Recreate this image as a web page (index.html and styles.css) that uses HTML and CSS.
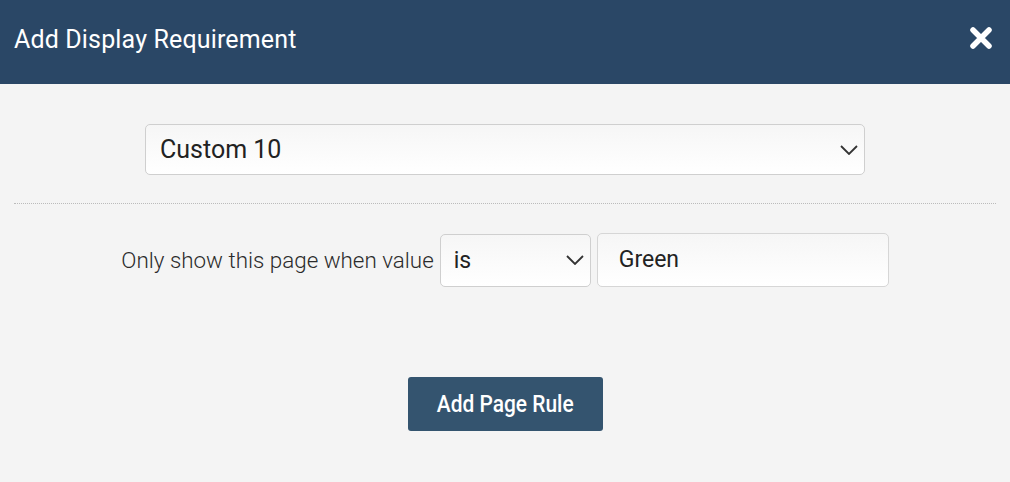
FILE: index.html
```html
<!DOCTYPE html>
<html>
<head>
<meta charset="utf-8">
<link rel="stylesheet" href="styles.css">
</head>
<body>
<div class="modal">
  <header class="modal-header">
    <h1 class="modal-title">Add Display Requirement</h1>
    <button class="close-btn" aria-label="Close">
      <svg width="24" height="24" viewBox="0 0 24 24"><path d="M4 4 L20 20 M20 4 L4 20" stroke="#fff" stroke-width="5.5" stroke-linecap="round"/></svg>
    </button>
  </header>
  <main class="modal-body">
    <div class="field-row">
      <div class="select big-select">
        <span>Custom 10</span>
        <svg class="chev" width="18" height="10" viewBox="0 0 18 10"><path d="M1 1 L9 9 L17 1" fill="none" stroke="#333" stroke-width="1.8"/></svg>
      </div>
    </div>
    <hr class="divider">
    <div class="rule-row">
      <span class="rule-label">Only show this page when value</span>
      <div class="select small-select">
        <span>is</span>
        <svg class="chev" width="18" height="10" viewBox="0 0 18 10"><path d="M1 1 L9 9 L17 1" fill="none" stroke="#333" stroke-width="1.8"/></svg>
      </div>
      <div class="text-input">Green</div>
    </div>
    <div class="actions">
      <button class="primary-btn"><span class="btn-label">Add Page Rule</span></button>
    </div>
  </main>
</div>
</body>
</html>
```
FILE: styles.css
```css
* { box-sizing: border-box; }
html, body { margin: 0; padding: 0; }
body {
  width: 1010px;
  height: 482px;
  background: #f4f4f4;
  font-family: Roboto, "Liberation Sans", sans-serif;
  overflow: hidden;
}
.modal-header {
  height: 84px;
  background: #2a4766;
  display: flex;
  align-items: center;
  justify-content: space-between;
  padding: 0 17px 0 14px;
}
.modal-title {
  margin: 0;
  color: #fff;
  font-size: 25px;
  font-weight: 400;
  letter-spacing: 0.15px;
  padding-bottom: 6px;
}
.close-btn {
  background: none;
  border: 0;
  padding: 0;
  width: 24px;
  height: 24px;
  display: flex;
  margin-bottom: 8px;
}
.modal-body {
  padding: 40px 14px 0;
}
.field-row {
  display: flex;
  justify-content: center;
}
.select {
  display: flex;
  align-items: center;
  justify-content: space-between;
  border: 1px solid #cfcfcf;
  border-radius: 5px;
  background: linear-gradient(#f6f6f6, #ffffff);
  color: #222;
}
.big-select {
  width: 720px;
  height: 51px;
  padding: 0 6px 0 14px;
  font-size: 25px;
}
.big-select span { padding-bottom: 1px; }
.divider {
  border: 0;
  border-top: 1px dotted #bbb;
  margin: 28px 0 0;
}
.rule-row {
  display: flex;
  align-items: center;
  justify-content: center;
  margin-top: 29px;
}
.rule-label {
  font-size: 22.4px;
  font-weight: 300;
  color: #2b2b2b;
  margin-right: 6px;
  white-space: nowrap;
}
.small-select {
  width: 151px;
  height: 53px;
  padding: 0 6px 0 13px;
  font-size: 23px;
}
.text-input {
  width: 292px;
  height: 54px;
  margin-left: 6px;
  border: 1px solid #d6d6d6;
  border-radius: 5px;
  background: linear-gradient(#f6f6f6, #ffffff);
  display: flex;
  align-items: center;
  padding: 0 0 2px 21px;
  font-size: 23px;
  color: #222;
}
.actions {
  display: flex;
  justify-content: center;
  margin-top: 90px;
}
.primary-btn {
  width: 195px;
  height: 54px;
  background: #34546f;
  border: 0;
  border-radius: 3px;
  color: #fff;
  font-family: Roboto, "Liberation Sans", sans-serif;
  font-size: 23px;
  font-weight: 500;
  padding: 0;
  display: flex;
  align-items: center;
  justify-content: center;
}
.btn-label {
  display: inline-block;
  transform: scaleX(0.91);
  white-space: nowrap;
}
```
